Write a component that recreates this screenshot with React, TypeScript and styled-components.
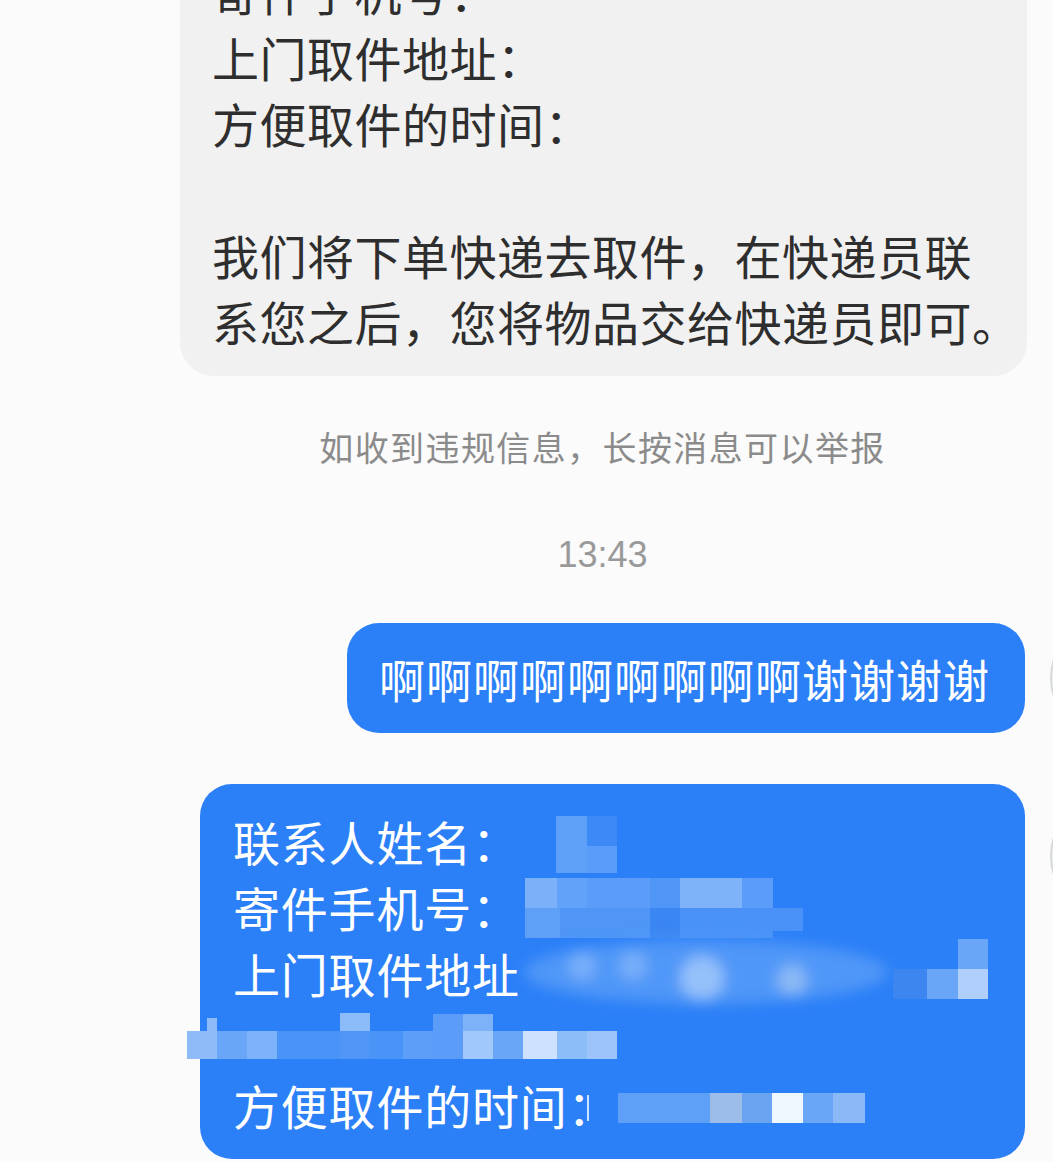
import * as React from "react";
import styled, { createGlobalStyle } from "styled-components";

type Cell = [number, number, number, number, string];
type Spot = [number, number, number, string];

const GlobalStyle = createGlobalStyle`
  html, body {
    margin: 0;
    padding: 0;
    background: #fbfbfb;
  }
  body {
    font-family: "Noto Sans CJK SC", "Liberation Sans", sans-serif;
    overflow: hidden;
  }
`;

const Page = styled.div`
  width: 1053px;
  height: 1162px;
  overflow: hidden;
  display: flex;
  flex-direction: column;
`;

const IncomingBubble = styled.div`
  margin: -66px 0 0 180px;
  width: 847px;
  box-sizing: border-box;
  padding: 24px 20px 22px 32px;
  background: #f1f1f1;
  border-radius: 34px;
  color: #2e2e2e;
  font-size: 47px;
  line-height: 66px;
  letter-spacing: 0.5px;
  white-space: nowrap;
`;

const Line = styled.div<{ gapBefore?: boolean }>`
  height: 66px;
  margin-top: ${(p) => (p.gapBefore ? "66px" : "0")};
`;

// the chat column is centred a little right of the page centre
const Notice = styled.div`
  margin-top: 47px;
  padding-left: 152px;
  text-align: center;
  color: #8b8b8b;
  font-size: 34px;
  line-height: 48px;
  letter-spacing: 1.4px;
`;

const TimeStamp = styled.div`
  margin-top: 62px;
  padding-left: 152px;
  text-align: center;
  color: #999;
  font-family: "Liberation Sans", Arial, sans-serif;
  font-size: 36px;
  line-height: 44px;
`;

const OutgoingRow = styled.div<{ top: number }>`
  margin-top: ${(p) => p.top}px;
  display: flex;
  justify-content: flex-end;
  align-items: flex-start;
  gap: 25px;
`;

const OutgoingBubble = styled.div`
  position: relative;
  background: #2b7ff7;
  color: #fff;
  border-radius: 32px;
  font-size: 46px;
  line-height: 66px;
  letter-spacing: 1px;
  white-space: nowrap;
  padding: 22px 35px 22px 32px;
`;

const FormBubble = styled(OutgoingBubble)`
  width: 825px;
  box-sizing: border-box;
  padding: 24px 20px 21px 33px;
  font-size: 47px;
  letter-spacing: 0.8px;
`;

const Avatar = styled.div<{ offset: number }>`
  flex: none;
  box-sizing: border-box;
  width: 120px;
  height: 120px;
  margin-top: ${(p) => p.offset}px;
  margin-right: -117px;
  margin-bottom: -60px;
  border-radius: 50%;
  background: #f0f2f2;
  border: 2px solid #d6dbda;
`;

const FieldRow = styled.div`
  position: relative;
  height: 66px;
`;

const Redaction = styled.svg`
  position: absolute;
  top: 0;
  overflow: visible;
`;

const Mosaic: React.FC<{ left: number; cells: Cell[]; spots?: Spot[]; blob?: boolean }> = ({
  left,
  cells,
  spots,
  blob,
}) => (
  <Redaction width={480} height={66} style={{ left }}>
    {blob && (
      <>
        <defs>
          <filter id="soft" x="-30%" y="-60%" width="160%" height="220%">
            <feGaussianBlur stdDeviation="7" />
          </filter>
        </defs>
        <g filter="url(#soft)">
          <ellipse cx={186} cy={32} rx={182} ry={32} fill="#4f97f8" />
          {spots?.map(([cx, cy, r, fill], i) => (
            <circle key={i} cx={cx} cy={cy} r={r} fill={fill} />
          ))}
        </g>
      </>
    )}
    {cells.map(([x, y, w, h, fill], i) => (
      <rect key={i} x={x} y={y} width={w} height={h} fill={fill} />
    ))}
  </Redaction>
);

// offsets are measured from the bubble's text column (x = 233)
const nameCells: Cell[] = [
  [0, 8, 31, 57, "#5fa0f8"],
  [31, 8, 30, 30, "#3d8af6"],
  [31, 38, 30, 27, "#5a9df8"],
];

const phoneCells: Cell[] = [
  [0, 4, 32, 30, "#7ab1f9"],
  [32, 4, 30, 30, "#62a2f8"],
  [62, 4, 63, 30, "#5a9cf8"],
  [125, 4, 30, 30, "#5096f7"],
  [155, 4, 62, 30, "#7eb3f9"],
  [217, 4, 31, 30, "#5a9cf8"],
  [0, 34, 35, 30, "#5e9ff8"],
  [35, 34, 90, 30, "#4f96f7"],
  [125, 34, 30, 30, "#3a86f3"],
  [155, 34, 93, 30, "#4a92f7"],
  [248, 34, 30, 23, "#4a92f7"],
];

const addressCells: Cell[] = [
  [373, 29, 34, 30, "#3d86ef"],
  [407, 29, 31, 30, "#6aa6f8"],
  [438, -1, 30, 30, "#6aa6f8"],
  [438, 29, 30, 30, "#b0d0fb"],
];

const addressSpots: Spot[] = [
  [62, 26, 14, "#78aff9"],
  [113, 26, 14, "#78aff9"],
  [182, 38, 22, "#95c1fa"],
  [272, 40, 15, "#8dbaf6"],
];

const extraCells: Cell[] = [
  [0, 25, 30, 28, "#8fbcf9"],
  [20, 12, 10, 13, "#8fbcf9"],
  [30, 25, 30, 28, "#6aa6f8"],
  [60, 25, 30, 28, "#7cb2f9"],
  [90, 25, 63, 28, "#4a93f7"],
  [153, 7, 30, 18, "#8cbbf9"],
  [153, 25, 30, 28, "#5096f7"],
  [183, 25, 33, 28, "#4a93f7"],
  [216, 25, 30, 28, "#5d9ff8"],
  [246, 8, 30, 45, "#5a9cf8"],
  [276, 8, 30, 17, "#7db2f9"],
  [276, 25, 30, 28, "#a1c8fb"],
  [306, 25, 30, 28, "#6aa6f8"],
  [336, 25, 34, 28, "#cfe2fd"],
  [370, 25, 30, 28, "#8dbdf9"],
  [400, 25, 30, 28, "#9cc4fa"],
];

const timeCells: Cell[] = [
  [-31, 23, 2, 26, "#cfe3fd"],
  [0, 21, 92, 30, "#5e9ff8"],
  [92, 21, 32, 30, "#9bbde8"],
  [124, 21, 30, 30, "#6aa3f0"],
  [154, 21, 31, 30, "#eef6ff"],
  [185, 21, 30, 30, "#6aa6f8"],
  [215, 21, 32, 30, "#8bb8f6"],
];

export default function App() {
  return (
    <Page>
      <GlobalStyle />
      <IncomingBubble>
        <Line>寄件手机号：</Line>
        <Line>上门取件地址：</Line>
        <Line>方便取件的时间：</Line>
        <Line gapBefore>我们将下单快递去取件，在快递员联</Line>
        <Line>系您之后，您将物品交给快递员即可。</Line>
      </IncomingBubble>

      <Notice>如收到违规信息，长按消息可以举报</Notice>
      <TimeStamp>13:43</TimeStamp>

      <OutgoingRow top={46}>
        <OutgoingBubble>啊啊啊啊啊啊啊啊啊谢谢谢谢</OutgoingBubble>
        <Avatar offset={-5} />
      </OutgoingRow>

      <OutgoingRow top={51}>
        <FormBubble>
          <FieldRow>
            联系人姓名：
            <Mosaic left={323} cells={nameCells} />
          </FieldRow>
          <FieldRow>
            寄件手机号：
            <Mosaic left={292} cells={phoneCells} />
          </FieldRow>
          <FieldRow>
            上门取件地址
            <Mosaic left={287} cells={addressCells} spots={addressSpots} blob />
          </FieldRow>
          <FieldRow>
            <Mosaic left={-46} cells={extraCells} />
          </FieldRow>
          <FieldRow>
            方便取件的时间：
            <Mosaic left={385} cells={timeCells} />
          </FieldRow>
        </FormBubble>
        <Avatar offset={12} />
      </OutgoingRow>
    </Page>
  );
}
